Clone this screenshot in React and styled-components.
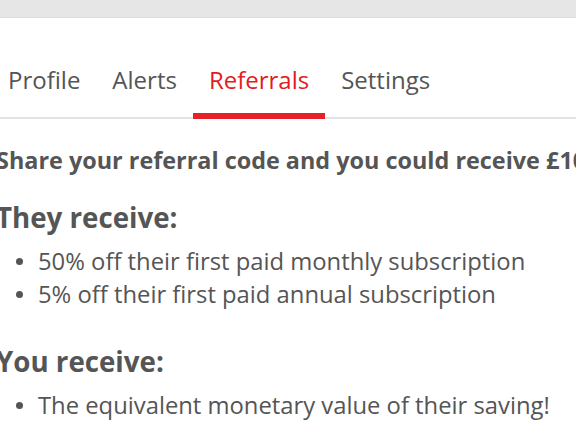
import React from 'react';
import styled, { createGlobalStyle } from 'styled-components';

const GlobalStyle = createGlobalStyle`
  body {
    margin: 0;
    background: #fff;
    font-family: "Open Sans", "Noto Sans", sans-serif;
    color: #555;
    overflow: hidden;
  }
`;

const TopBar = styled.div`
  height: 17px;
  background-color: #e6e6e6;
  border-bottom: 1px solid #dcdcdc;
`;

const TabBar = styled.nav`
  display: flex;
  margin-top: 46px;
  margin-left: -8px;
  border-bottom: 2px solid #e2e2e2;
`;

const Tab = styled.a`
  display: block;
  padding: 0 16px;
  font-size: 24px;
  line-height: 32px;
  padding-bottom: 17px;
  margin-bottom: -2px;
  color: ${(p) => (p.$active ? '#e31b23' : '#555')};
  border-bottom: 6px solid ${(p) => (p.$active ? '#e8202a' : 'transparent')};
  text-decoration: none;
  cursor: pointer;
`;

const Content = styled.section`
  margin-left: -4px;
  padding-top: 27px;
`;

const Lead = styled.p`
  margin: 0;
  font-size: 23.4px;
  font-weight: 700;
  line-height: 28px;
  white-space: nowrap;
`;

const Heading = styled.h2`
  margin: ${(p) => p.$top}px 0 0;
  font-size: 27.7px;
  font-weight: 700;
  line-height: 36px;
`;

const List = styled.ul`
  list-style: none;
  margin: ${(p) => p.$top}px 0 0;
  padding: 0 0 0 42px;
`;

const Item = styled.li`
  position: relative;
  font-size: 23.8px;
  line-height: 33px;
  white-space: nowrap;

  &::before {
    content: '';
    position: absolute;
    left: -22px;
    top: 13px;
    width: 7px;
    height: 7px;
    border-radius: 50%;
    background: #555;
  }
`;

const tabs = ['Profile', 'Alerts', 'Referrals', 'Settings'];

export default function App() {
  return (
    <>
      <GlobalStyle />
      <TopBar />
      <TabBar>
        {tabs.map((t) => (
          <Tab key={t} $active={t === 'Referrals'}>
            {t}
          </Tab>
        ))}
      </TabBar>
      <Content>
        <Lead>Share your referral code and you could receive £10 off your next subscription</Lead>
        <Heading $top={25}>They receive:</Heading>
        <List $top={10}>
          <Item>50% off their first paid monthly subscription</Item>
          <Item>5% off their first paid annual subscription</Item>
        </List>
        <Heading $top={32}>You receive:</Heading>
        <List $top={10}>
          <Item>The equivalent monetary value of their saving!</Item>
        </List>
      </Content>
    </>
  );
}
